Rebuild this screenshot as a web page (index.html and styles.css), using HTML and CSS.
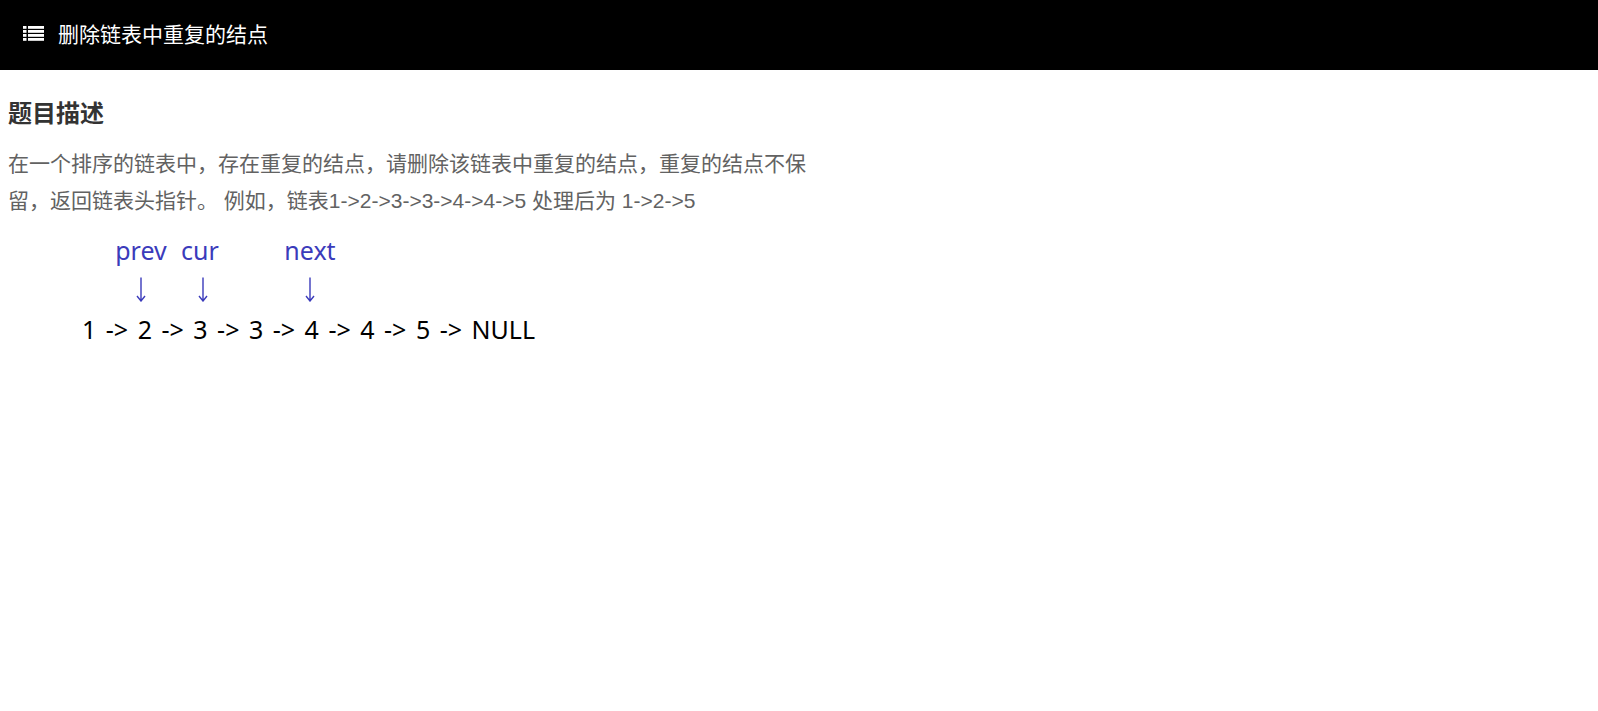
FILE: index.html
```html
<!DOCTYPE html>
<html lang="zh-CN">
<head>
<meta charset="utf-8">
<title>删除链表中重复的结点</title>
<link rel="stylesheet" href="styles.css">
</head>
<body>
<header class="topbar">
  <svg class="list-icon" width="21" height="15" viewBox="0 0 21 15" aria-hidden="true">
    <rect x="0" y="0" width="3.5" height="2.8" fill="#fff"/>
    <rect x="5" y="0" width="16" height="2.8" fill="#fff"/>
    <rect x="0" y="4" width="3.5" height="2.8" fill="#fff"/>
    <rect x="5" y="4" width="16" height="2.8" fill="#fff"/>
    <rect x="0" y="8" width="3.5" height="2.8" fill="#fff"/>
    <rect x="5" y="8" width="16" height="2.8" fill="#fff"/>
    <rect x="0" y="12" width="3.5" height="2.8" fill="#fff"/>
    <rect x="5" y="12" width="16" height="2.8" fill="#fff"/>
  </svg>
  <span class="topbar-title">删除链表中重复的结点</span>
</header>
<main class="content">
  <h2 class="section-title">题目描述</h2>
  <p class="desc">在一个排序的链表中，存在重复的结点，请删除该链表中重复的结点，重复的结点不保留，返回链表头指针。 例如，链表1-&gt;2-&gt;3-&gt;3-&gt;4-&gt;4-&gt;5 处理后为 1-&gt;2-&gt;5</p>
  <div class="diagram">
    <div class="pointers">
      <div class="pointer p-prev">
        <span class="ptr-label">prev</span>
        <svg class="ptr-arrow" width="10" height="25" viewBox="0 0 10 25"><path d="M5 0.5 V24 M1 19 L5 24 L9 19" fill="none" stroke="#3b3bbb" stroke-width="1.4"/></svg>
      </div>
      <div class="pointer p-cur">
        <span class="ptr-label">cur</span>
        <svg class="ptr-arrow arrow-cur" width="10" height="25" viewBox="0 0 10 25"><path d="M5 0.5 V24 M1 19 L5 24 L9 19" fill="none" stroke="#3b3bbb" stroke-width="1.4"/></svg>
      </div>
      <div class="pointer p-next">
        <span class="ptr-label">next</span>
        <svg class="ptr-arrow" width="10" height="25" viewBox="0 0 10 25"><path d="M5 0.5 V24 M1 19 L5 24 L9 19" fill="none" stroke="#3b3bbb" stroke-width="1.4"/></svg>
      </div>
    </div>
    <div class="chain">1 -&gt; 2 -&gt; 3 -&gt; 3 -&gt; 4 -&gt; 4 -&gt; 5 -&gt; NULL</div>
  </div>
</main>
</body>
</html>
```

FILE: styles.css
```css
html, body {
  margin: 0;
  padding: 0;
  background: #fff;
}

body {
  font-family: "Liberation Sans", "Noto Sans CJK SC", sans-serif;
}

.topbar {
  height: 70px;
  background: #000;
  display: flex;
  align-items: center;
  padding-left: 23px;
  padding-bottom: 4px;
  box-sizing: border-box;
}

.list-icon {
  display: block;
  margin-right: 14px;
  margin-top: 1px;
}

.topbar-title {
  color: #fff;
  font-family: "Noto Sans CJK SC", sans-serif;
  font-size: 21px;
  line-height: 1;
}

.content {
  padding: 0 8px;
}

.section-title {
  margin: 24px 0 0;
  font-family: "Noto Sans CJK SC", sans-serif;
  font-size: 24px;
  font-weight: 700;
  line-height: 36px;
  color: #333;
}

.desc {
  margin: 15px 0 0;
  width: 802px;
  font-size: 21px;
  line-height: 37px;
  color: #626262;
}

.diagram {
  margin-top: 12px;
  font-family: "Noto Sans", sans-serif;
  font-size: 25px;
}

.pointers {
  display: flex;
  padding-left: 104px;
}

.pointer {
  width: 58px;
  display: flex;
  flex-direction: column;
  align-items: center;
  color: #3b3bbb;
}

.p-cur {
  margin-left: 1px;
}

.p-next {
  margin-left: 52px;
}

.ptr-label {
  line-height: 38px;
}

.ptr-arrow {
  display: block;
  margin: 8px 0 7px;
}

.arrow-cur {
  margin-left: 5px;
}

.chain {
  padding-left: 74px;
  white-space: pre;
  word-spacing: 3px;
  line-height: 40px;
  color: #000;
}
```
